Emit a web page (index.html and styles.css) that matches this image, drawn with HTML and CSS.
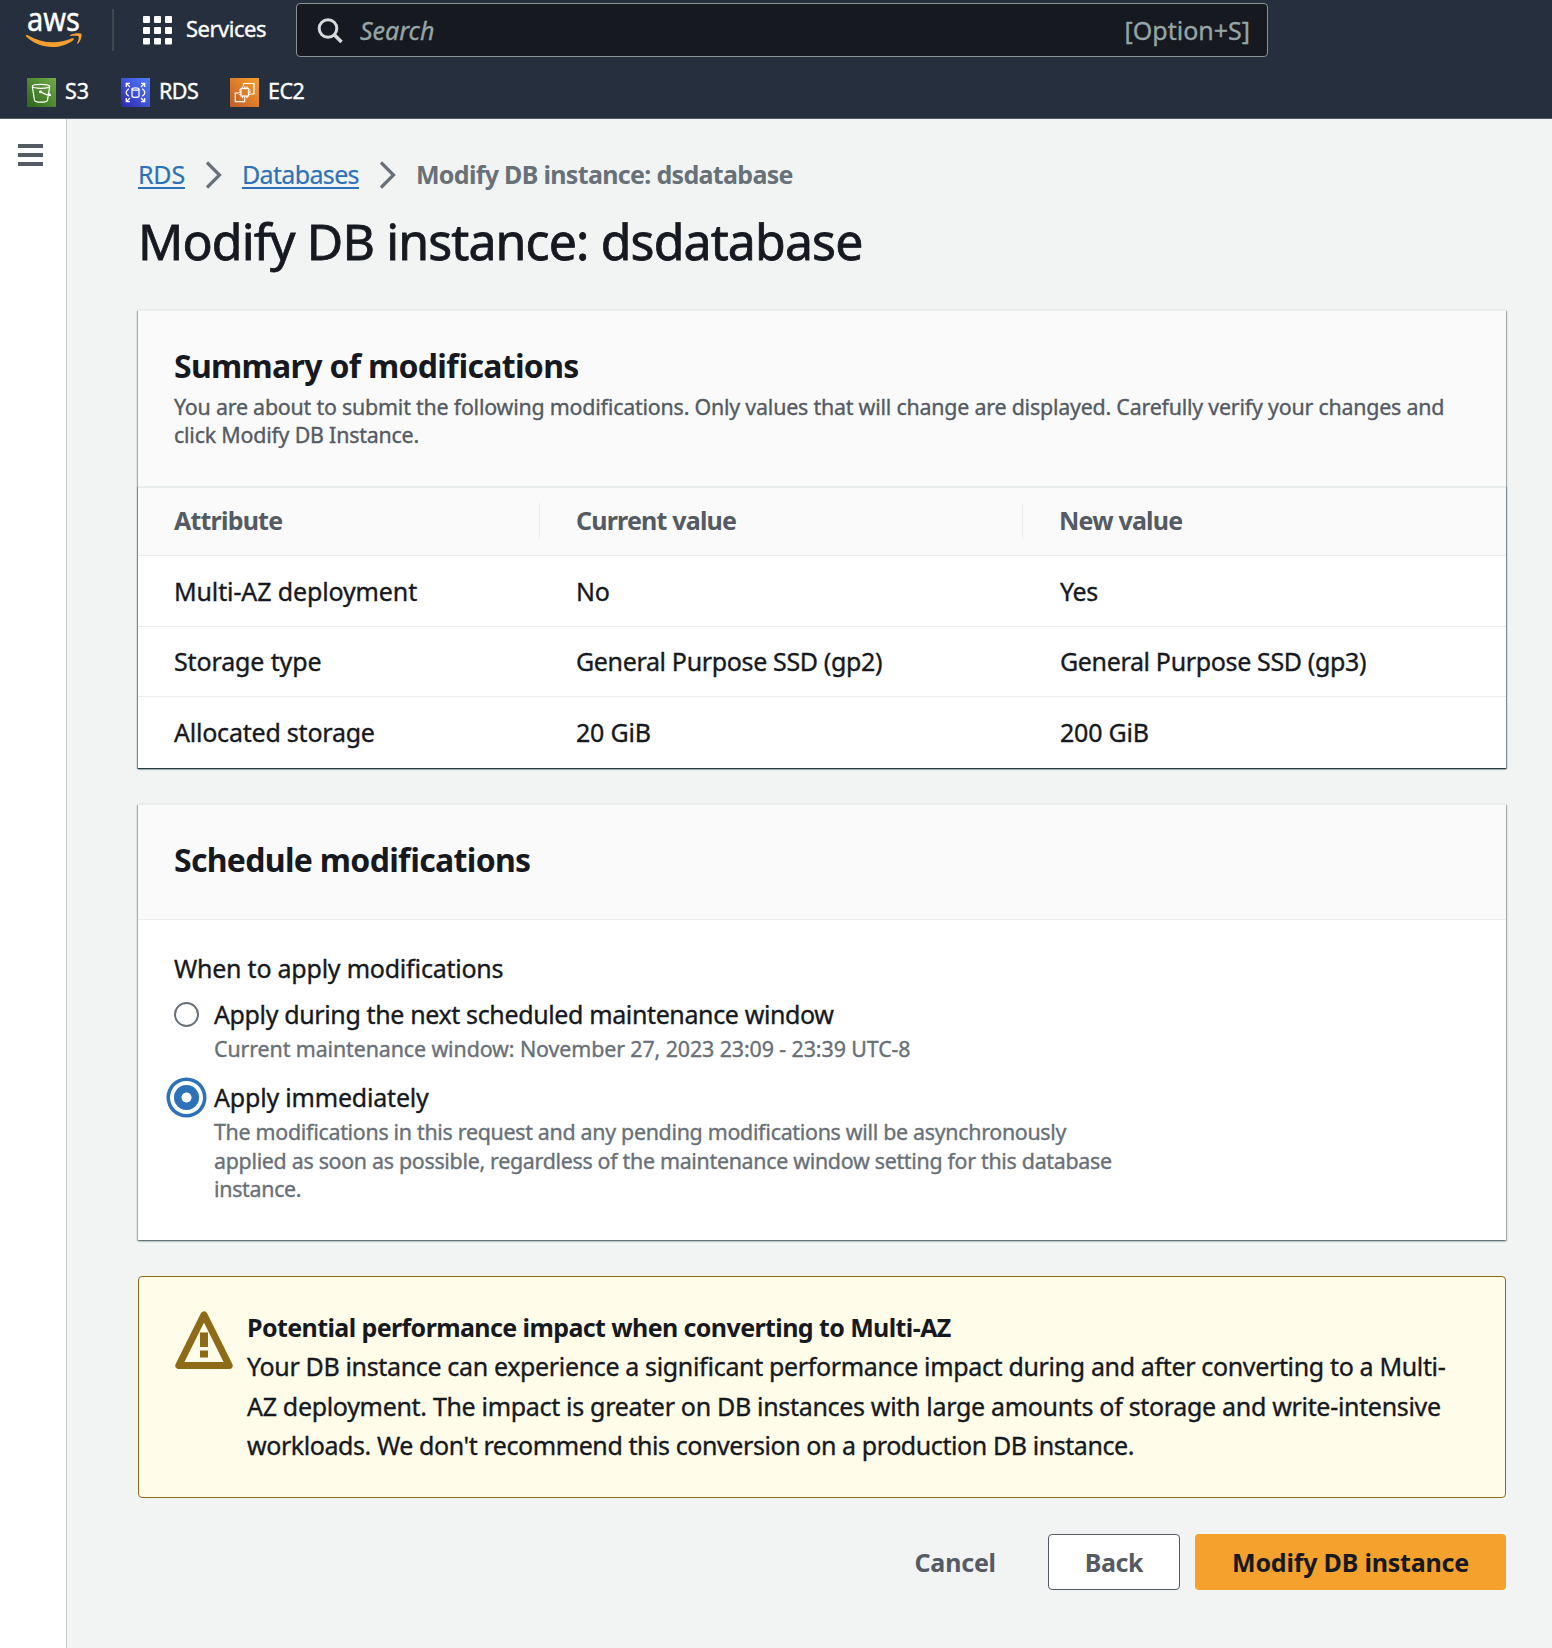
FILE: index.html
```html
<!DOCTYPE html>
<html lang="en">
<head>
<meta charset="utf-8">
<title>Modify DB instance: dsdatabase</title>
<link rel="stylesheet" href="styles.css">
</head>
<body>
<header class="topbar">
  <div class="topbar-main">
    <svg class="logo" width="58" height="48" viewBox="0 -8 58 48" role="img" aria-label="aws">
      <text class="logo-text" x="2" y="22.500" textLength="53" lengthAdjust="spacingAndGlyphs">aws</text>
      <path fill="#f3a02f" d="M.8 27.400c.3-.6 1-.6 1.800-.2 8 4.600 16.500 7.100 25.500 7.100 6.500 0 12.500-1.400 19-4 1.500-.6 2.500.6 1.300 1.600-5.500 4.700-13.300 7.100-20.800 7.100C17.500 39 8 35 1.100 28.500c-.3-.3-.5-.7-.3-1.100z"/>
      <path fill="#f3a02f" d="M45.400 28c-.6.100-.6-.5-.1-.9 3-2.100 10.200-2.400 11-1.300.9 1.200-.4 7.300-3.200 9.700-.6.500-1.200.2-.9-.5.800-1.800 2.100-5.500 1.300-6.500-.8-1-5.500-.7-8.100-.5z"/>
    </svg>
    <span class="divider"></span>
    <svg class="grid-icon" width="29" height="29" viewBox="0 0 29 29" fill="#fff">
      <rect x="0" y="0" width="7" height="7" rx="1"/><rect x="11" y="0" width="7" height="7" rx="1"/><rect x="22" y="0" width="7" height="7" rx="1"/>
      <rect x="0" y="11" width="7" height="7" rx="1"/><rect x="11" y="11" width="7" height="7" rx="1"/><rect x="22" y="11" width="7" height="7" rx="1"/>
      <rect x="0" y="22" width="7" height="6.500" rx="1"/><rect x="11" y="22" width="7" height="6.500" rx="1"/><rect x="22" y="22" width="7" height="6.500" rx="1"/>
    </svg>
    <span class="services">Services</span>
    <div class="search">
      <svg width="26" height="26" viewBox="0 0 26 26" fill="none" stroke="#d5dbdb" stroke-width="3"><circle cx="11" cy="10.500" r="8.800"/><path d="M17 16.500l7.500 7.500" stroke-width="3.600"/></svg>
      <span class="search-hint">Search</span>
      <span class="search-key">[Option+S]</span>
    </div>
  </div>
  <nav class="favorites">
    <a class="fav fav-s3">
      <svg width="29" height="29" viewBox="0 0 29 29" fill="none" stroke="#fff" stroke-width="1.200">
        <defs><linearGradient id="g1" x1="0" y1="1" x2="1" y2="0"><stop offset="0" stop-color="#2b661b"/><stop offset="1" stop-color="#73ab47"/></linearGradient></defs>
        <rect width="29" height="29" fill="url(#g1)" stroke="none"/>
        <ellipse cx="14" cy="8.300" rx="8.700" ry="2"/><path d="M5.300 8.500l2.200 13.700c.8 2.600 12.200 2.600 13 0L22.700 8.500M14 14c3 1.700 6.500 3.200 8.900 3.400 1.700 0-.5-1.700-2-2.600"/><circle cx="13.600" cy="13.800" r=".9" fill="#fff"/>
      </svg><span>S3</span></a>
    <a class="fav fav-rds">
      <svg width="29" height="29" viewBox="0 0 29 29" fill="none" stroke="#fff" stroke-width="1.300">
        <defs><linearGradient id="g2" x1="0" y1="1" x2="1" y2="0"><stop offset="0" stop-color="#2e27ad"/><stop offset="1" stop-color="#527fff"/></linearGradient></defs>
        <rect width="29" height="29" fill="url(#g2)" stroke="none"/>
        <path d="M5.300 9V5.300H9M5.300 5.300L9 9M20 5.300h3.700V9M23.700 5.300L20 9M5.300 20v3.700H9M5.300 23.700L9 20M20 23.700h3.700V20M23.700 23.700L20 20M7.800 10.800c-2.600 2-2.600 1.700-2.600 3.700s0 1.700 2.600 3.700M21.200 10.800c2.600 2 2.600 1.700 2.600 3.700s0 1.700-2.600 3.700"/>
        <path d="M11 11.200v7c0 1.500 7 1.500 7 0v-7"/><ellipse cx="14.500" cy="11" rx="3.500" ry="1.200"/>
      </svg><span>RDS</span></a>
    <a class="fav fav-ec2">
      <svg width="29" height="29" viewBox="0 0 29 29" fill="none" stroke="#fff" stroke-width="1.200">
        <defs><linearGradient id="g3" x1="0" y1="1" x2="1" y2="0"><stop offset="0" stop-color="#c45a27"/><stop offset="1" stop-color="#f7a12c"/></linearGradient></defs>
        <rect width="29" height="29" fill="url(#g3)" stroke="none"/>
        <path d="M13.500 8V5.500H24V16h-3.500M9 15H5.300v8.700h9.400V20.500"/><rect x="11" y="10.500" width="7.500" height="7.500"/>
        <path d="M12.500 8.500v2M14.750 8.500v2M17 8.500v2M12.500 18v2.200M14.750 18v2.200M17 18v2.200M9 12h2M9 14.200h2M9 16.500h2M18.500 12h2M18.500 14.200h2M18.500 16.500h2"/>
      </svg><span>EC2</span></a>
  </nav>
</header>
<div class="page">
  <aside class="rail">
    <svg width="25" height="23" viewBox="0 0 25 23" fill="#545b64"><rect y="0" width="25" height="4"/><rect y="9" width="25" height="4"/><rect y="18" width="25" height="4"/></svg>
  </aside>
  <main class="content">
    <nav class="crumbs">
      <a class="crumb-rds">RDS</a>
      <svg width="17" height="28" viewBox="0 0 17 28" fill="none" stroke="#687078" stroke-width="3.200"><path d="M2 1.500L14.500 14 2 26.500"/></svg>
      <a class="crumb-db">Databases</a>
      <svg width="17" height="28" viewBox="0 0 17 28" fill="none" stroke="#687078" stroke-width="3.200"><path d="M2 1.500L14.500 14 2 26.500"/></svg>
      <strong>Modify DB instance: dsdatabase</strong>
    </nav>
    <h1 class="title">Modify DB instance: dsdatabase</h1>

    <section class="panel summary">
      <div class="panel-head">
        <h2 class="h2">Summary of modifications</h2>
        <p class="lead">You are about to submit the following modifications. Only values that will change are displayed. Carefully verify your changes and<br>click Modify DB Instance.</p>
      </div>
      <div class="table">
        <div class="row row-head"><span class="cell">Attribute</span><span class="cell">Current value</span><span class="cell">New value</span></div>
        <div class="row"><span class="cell cell-wide">Multi-AZ deployment</span><span class="cell">No</span><span class="cell">Yes</span></div>
        <div class="row"><span class="cell cell-wide">Storage type</span><span class="cell">General Purpose SSD (gp2)</span><span class="cell">General Purpose SSD (gp3)</span></div>
        <div class="row"><span class="cell">Allocated storage</span><span class="cell">20 GiB</span><span class="cell">200 GiB</span></div>
      </div>
    </section>

    <section class="panel schedule">
      <div class="panel-head"><h2 class="h2">Schedule modifications</h2></div>
      <div class="panel-body">
        <p class="label">When to apply modifications</p>
        <div class="option">
          <span class="radio"></span>
          <div>
            <p class="option-title">Apply during the next scheduled maintenance window</p>
            <p class="option-desc option-window">Current maintenance window: November 27, 2023 23:09 - 23:39 UTC-8</p>
          </div>
        </div>
        <div class="option">
          <span class="radio checked"></span>
          <div>
            <p class="option-title option-now">Apply immediately</p>
            <p class="option-desc">The modifications in this request and any pending modifications will be asynchronously<br>applied as soon as possible, regardless of the maintenance window setting for this database<br>instance.</p>
          </div>
        </div>
      </div>
    </section>

    <section class="alert">
      <svg width="58" height="59" viewBox="0 0 58 59"><path d="M29 3.800L3.800 54.500h50.400z" fill="none" stroke="#8d6b17" stroke-width="7" stroke-linejoin="round"/><path d="M25 21.500h8v14.500h-8zM25 39.500h8v7h-8z" fill="#8d6b17"/></svg>
      <div class="alert-text"><strong>Potential performance impact when converting to Multi-AZ</strong><br>Your DB instance can experience a significant performance impact during and after converting to a Multi-<br><span class="loose">AZ deployment. The impact is greater on DB instances with large amounts of storage and write-intensive</span><br><span class="tight">workloads. We don't recommend this conversion on a production DB instance.</span></div>
    </section>

    <div class="actions">
      <a class="btn btn-link">Cancel</a>
      <a class="btn btn-normal">Back</a>
      <a class="btn btn-primary">Modify DB instance</a>
    </div>
  </main>
</div>
</body>
</html>
```
FILE: styles.css
```css
* { box-sizing: border-box; }
body { margin: 0; font-family: "Noto Sans", "Open Sans", sans-serif; font-size: 25px; color: #16191f; background: #f2f4f4; font-feature-settings: "liga" 1; -webkit-text-stroke: 0.35px currentColor; }
h1, h2, p { margin: 0; font-weight: 400; }
svg { display: block; flex: none; }
strong, .row-head, .btn, .h2 { font-weight: 700; -webkit-text-stroke: 0; }

/* Top navigation */
.topbar { height: 119px; background: #262f3e; border-bottom: 1px solid #545b64; color: #fff; white-space: nowrap; }
.topbar-main { display: flex; height: 60px; padding-left: 25px; }
.logo { overflow: visible; }
.logo-text { font-size: 33px; fill: #fff; stroke: #fff; stroke-width: 0.4px; -webkit-text-stroke: 0; }
.divider { flex: none; width: 2px; height: 42px; margin: 9px 29px 0 29px; background: #414750; }
.grid-icon { margin-top: 16px; }
.services { flex: none; width: 124px; padding-left: 14px; font-size: 22px; line-height: 57px; letter-spacing: -0.49px; }
.search { display: flex; flex: none; width: 972px; height: 54px; margin-top: 3px; padding: 0 17px 0 20px; border: 1px solid #879596; border-radius: 4px; background: #16191f; color: #95a5a6; line-height: 52px; }
.search svg { margin-top: 14px; }
.search-hint { margin-left: 17px; font-style: italic; letter-spacing: -0.04px; }
.search-key { margin-left: auto; }
.favorites { display: flex; padding: 18px 0 0 27px; font-size: 21.500px; line-height: 26px; letter-spacing: -0.5px; }
.fav { display: flex; gap: 9px; }
.fav-s3 { width: 94px; letter-spacing: 0; }
.fav-rds { width: 109px; }

/* Page frame */
.page { display: flex; height: 1529px; }
.rail { flex: none; width: 67px; padding: 25px 0 0 18px; background: #fff; border-right: 1px solid #c3c9c9; }
.content { flex: 1; padding: 37px 46px 0 71px; white-space: nowrap; }
.crumbs { display: flex; height: 36px; line-height: 36px; color: #687078; letter-spacing: -0.64px; }
.crumbs svg { margin: 5px 20px 0; }
.crumbs a { color: #2d72b8; text-decoration: underline; text-decoration-thickness: 2px; text-underline-offset: 3px; -webkit-text-stroke-width: 0.2px; }
.crumbs .crumb-rds { letter-spacing: -0.2px; }
.crumbs strong { letter-spacing: -0.68px; }
.title { margin-top: 19px; font-size: 50px; line-height: 60px; letter-spacing: -0.88px; -webkit-text-stroke-width: 0.8px; }

/* Panels */
.panel { background: #fff; box-shadow: 0 1px 2px rgba(0, 28, 36, 0.5), 1px 1px 1px rgba(0, 28, 36, 0.2), -1px 1px 1px rgba(0, 28, 36, 0.2); }
.panel-head { padding: 35px 36px 0; background: #fafafa; border-top: 1px solid #eaeded; }
.h2 { font-size: 32px; line-height: 40px; letter-spacing: -0.69px; }
.summary { height: 458px; margin-top: 39px; }
.summary .panel-head { height: 176px; }
.lead { margin-top: 7px; color: #545b64; font-size: 21.400px; line-height: 28.400px; letter-spacing: -0.21px; }
.table { box-shadow: 0 1px 1px rgba(0, 28, 36, 0.5), 1px 1px 1px rgba(0, 28, 36, 0.15), -1px 1px 1px rgba(0, 28, 36, 0.15); }
.row { display: grid; grid-template-columns: 402px 484px 1fr; height: 70px; line-height: 69px; border-bottom: 1px solid #eaeded; letter-spacing: -0.35px; }
.row:nth-child(2) { height: 71px; line-height: 70px; }
.row:last-child { height: 71px; line-height: 71px; border: 0; letter-spacing: -0.22px; }
.row-head { grid-template-columns: 401px 483px 1fr; padding: 15px 0 16px; line-height: 35px; background: #fafafa; color: #545b64; border-top: 2px solid #eaeded; letter-spacing: -0.8px; }
.cell { padding-left: 36px; }
.cell-wide { letter-spacing: -0.13px; }
.row-head .cell + .cell { border-left: 1px solid #eaeded; }
.schedule { height: 436px; margin-top: 36px; }
.schedule .panel-head { height: 116px; border-bottom: 1px solid #eaeded; }
.panel-body { padding: 30px 36px; }
.label { line-height: 36px; letter-spacing: -0.23px; }

/* Radio options */
.option { display: flex; gap: 15px; margin-top: 10px; }
.option + .option { margin-top: 16px; }
.radio { flex: none; width: 25px; height: 25px; margin-top: 6px; border: 2px solid #687078; border-radius: 50%; background: #fff; }
.radio.checked { border: 0; background: radial-gradient(circle, #fff 4.600px, #2d72b8 5.400px); box-shadow: 0 0 0 4px #fff, 0 0 0 7.500px #2d72b8; }
.option-title { margin-bottom: 3px; line-height: 36px; letter-spacing: -0.37px; }
.option-now { letter-spacing: -0.19px; }
.option-desc { color: #687078; font-size: 21.400px; line-height: 28.400px; letter-spacing: -0.3px; }
.option-window { letter-spacing: -0.1px; }

/* Warning */
.alert { display: flex; gap: 14px; height: 222px; margin-top: 36px; padding: 34px 36px; border: 1px solid #8d6b17; border-radius: 4px; background: #fffce9; line-height: 39.300px; letter-spacing: -0.35px; }
.alert strong { letter-spacing: -0.6px; }
.alert-text { margin-top: -3px; }
.loose { letter-spacing: -0.315px; }
.tight { letter-spacing: -0.42px; }

/* Footer actions */
.actions { display: flex; justify-content: flex-end; gap: 15px; margin-top: 36px; }
.btn { height: 56px; padding: 0 36px; border: 1px solid transparent; border-radius: 4px; line-height: 54px; color: #545b64; letter-spacing: -0.2px; }
.btn-normal { background: #fff; border-color: #545b64; letter-spacing: -0.45px; }
.btn-primary { background: #f4a12d; color: #16191f; }
```
